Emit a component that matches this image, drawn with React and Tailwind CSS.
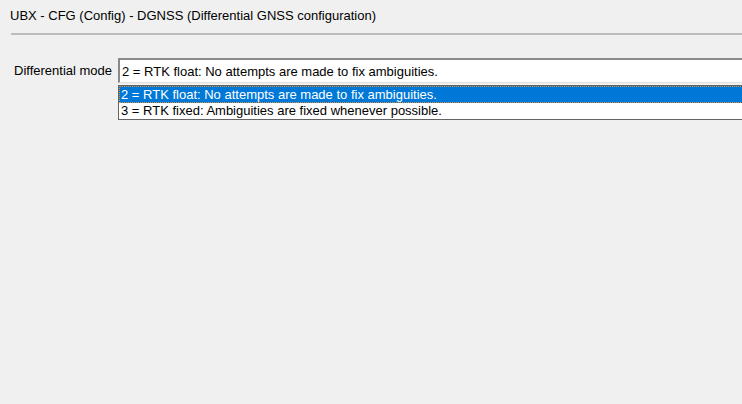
export default function App() {
  const font = { fontFamily: '"Liberation Sans", Arial, sans-serif' };
  return (
    <div
      className="w-[742px] h-[404px] overflow-hidden bg-[#f0f0f0] text-[13px] text-black"
      style={font}
    >
      <div className="pl-[10px] pt-[9px] h-[33px] leading-[14px] whitespace-nowrap">
        UBX - CFG (Config) - DGNSS (Differential GNSS configuration)
      </div>
      <div className="ml-[11px] h-[2px] bg-[#bcbcbc]" />
      <div className="flex items-start pt-[23px]">
        <div className="pl-[14px] w-[118px] shrink-0 pt-[6px] leading-[14px] whitespace-nowrap">
          Differential mode
        </div>
        <div className="flex flex-col w-[700px] shrink-0 whitespace-nowrap">
          <div className="h-[25px] border-t-2 border-l-2 border-t-[#8a8a8a] border-l-[#8a8a8a] border-b border-r border-b-[#e3e3e3] border-r-[#e3e3e3] bg-white pl-[2px] pt-[5px] leading-[14px]">
            2 = RTK float: No attempts are made to fix ambiguities.
          </div>
          <div className="mt-[2px] border border-[#646464] bg-white">
            <div className="h-[17px] bg-[#0078d7] text-white border border-dotted border-[#e08a3a] pl-[1px] leading-[15px]">
              2 = RTK float: No attempts are made to fix ambiguities.
            </div>
            <div className="h-[16px] pl-[2px] leading-[15px]">
              3 = RTK fixed: Ambiguities are fixed whenever possible.
            </div>
          </div>
        </div>
      </div>
    </div>
  );
}
